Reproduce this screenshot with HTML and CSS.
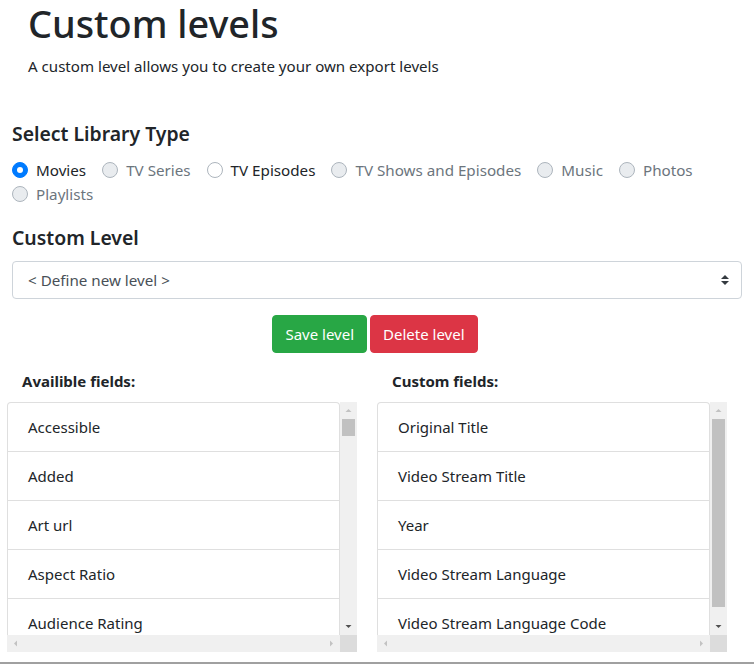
FILE: index.html
```html
<!DOCTYPE html>
<html lang="en">
<head>
<meta charset="utf-8">
<title>Custom levels</title>
<link rel="stylesheet" href="styles.css">
</head>
<body>
<div class="page">
  <header class="intro">
    <h1 class="title">Custom levels</h1>
    <p class="lead">A custom level allows you to create your own export levels</p>
  </header>

  <h5 class="section">Select Library Type</h5>
  <div class="radios">
    <label class="radio"><span class="dot checked"></span><span class="rlabel">Movies</span></label>
    <label class="radio disabled"><span class="dot"></span><span class="rlabel">TV Series</span></label>
    <label class="radio"><span class="dot"></span><span class="rlabel">TV Episodes</span></label>
    <label class="radio disabled"><span class="dot"></span><span class="rlabel">TV Shows and Episodes</span></label>
    <label class="radio disabled"><span class="dot"></span><span class="rlabel">Music</span></label>
    <label class="radio disabled"><span class="dot"></span><span class="rlabel">Photos</span></label>
    <label class="radio disabled"><span class="dot"></span><span class="rlabel">Playlists</span></label>
  </div>

  <h5 class="section section-2">Custom Level</h5>
  <div class="select">
    <span class="select-text">&lt; Define new level &gt;</span>
    <svg class="select-arrow" width="8" height="10" viewBox="0 0 4 5"><path fill="#343a40" d="M2 0L0 2h4zm0 5L0 3h4z"/></svg>
  </div>

  <div class="buttons">
    <button class="btn btn-save">Save level</button>
    <button class="btn btn-delete">Delete level</button>
  </div>

  <div class="columns">
    <div class="col">
      <div class="col-label">Availible fields:</div>
      <div class="scrollbox">
        <div class="viewport">
          <ul class="list">
            <li>Accessible</li>
            <li>Added</li>
            <li>Art url</li>
            <li>Aspect Ratio</li>
            <li>Audience Rating</li>
          </ul>
        </div>
        <div class="vbar">
          <svg class="arrow" width="17" height="17" viewBox="0 0 17 17"><path fill="#c2c2c2" d="M5.5 10h6L8.5 7z"/></svg>
          <div class="thumb thumb-small"></div>
          <div class="track-fill"></div>
          <svg class="arrow" width="17" height="17" viewBox="0 0 17 17"><path fill="#505050" d="M5.5 7h6L8.5 10z"/></svg>
        </div>
        <div class="hbar">
          <svg class="arrow" width="17" height="17" viewBox="0 0 17 17"><path fill="#c2c2c2" d="M10 5.5v6L7 8.5z"/></svg>
          <svg class="arrow" width="17" height="17" viewBox="0 0 17 17"><path fill="#c2c2c2" d="M7 5.5v6L10 8.5z"/></svg>
        </div>
        <div class="corner"></div>
      </div>
    </div>
    <div class="col">
      <div class="col-label">Custom fields:</div>
      <div class="scrollbox">
        <div class="viewport">
          <ul class="list">
            <li>Original Title</li>
            <li>Video Stream Title</li>
            <li>Year</li>
            <li>Video Stream Language</li>
            <li>Video Stream Language Code</li>
          </ul>
        </div>
        <div class="vbar">
          <svg class="arrow" width="17" height="17" viewBox="0 0 17 17"><path fill="#c2c2c2" d="M5.5 10h6L8.5 7z"/></svg>
          <div class="thumb thumb-large"></div>
          <div class="track-fill"></div>
          <svg class="arrow" width="17" height="17" viewBox="0 0 17 17"><path fill="#505050" d="M5.5 7h6L8.5 10z"/></svg>
        </div>
        <div class="hbar">
          <svg class="arrow" width="17" height="17" viewBox="0 0 17 17"><path fill="#c2c2c2" d="M10 5.5v6L7 8.5z"/></svg>
          <svg class="arrow" width="17" height="17" viewBox="0 0 17 17"><path fill="#c2c2c2" d="M7 5.5v6L10 8.5z"/></svg>
        </div>
        <div class="corner"></div>
      </div>
    </div>
  </div>
  <div class="bottom-rule"></div>
</div>
</body>
</html>
```

FILE: styles.css
```css
* { box-sizing: border-box; }

html, body {
  margin: 0;
  padding: 0;
  background: #fff;
}

body {
  font-family: "Noto Sans", "Open Sans", sans-serif;
  font-size: 15px;
  line-height: 24px;
  color: #212529;
  overflow: hidden;
}

.page {
  width: 754px;
  height: 664px;
  padding: 0 12px 0 12px;
}

.intro {
  padding-left: 16px;
}

.title {
  margin: 0;
  font-size: 37.8px;
  font-weight: 500;
  line-height: 48px;
  letter-spacing: 0;
}

.lead {
  margin: 6px 0 0 0;
  font-size: 15.1px;
  line-height: 24px;
}

.section {
  margin: 44px 0 0 0;
  font-size: 19.4px;
  font-weight: 600;
  line-height: 24px;
}

.section-2 {
  margin-top: 20px;
}

.radios {
  display: flex;
  flex-wrap: wrap;
  margin-top: 12px;
  width: 730px;
}

.radio {
  display: flex;
  align-items: center;
  margin-right: 16px;
  height: 24px;
  font-size: 15.2px;
}

.dot {
  width: 16px;
  height: 16px;
  border-radius: 50%;
  border: 1px solid #adb5bd;
  background: #fff;
  margin-right: 8px;
  display: flex;
  align-items: center;
  justify-content: center;
}

.radio.disabled .dot {
  background: #e9ecef;
}

.radio.disabled .rlabel {
  color: #6c757d;
}

.dot.checked {
  background: #007bff;
  border-color: #007bff;
}

.dot.checked::after {
  content: "";
  width: 6px;
  height: 6px;
  border-radius: 50%;
  background: #fff;
}

.select {
  margin-top: 11px;
  height: 38px;
  width: 730px;
  border: 1px solid #ced4da;
  border-radius: 4px;
  display: flex;
  align-items: center;
  justify-content: space-between;
  padding: 0 12px 0 15px;
  color: #495057;
  font-size: 15.2px;
}

.select-arrow {
  display: block;
}

.buttons {
  display: flex;
  justify-content: center;
  gap: 3px;
  margin-top: 16px;
  padding-right: 4px;
}

.btn {
  font-family: inherit;
  font-size: 15px;
  line-height: 24px;
  padding: 6px 12px;
  height: 38px;
  border-radius: 4px;
  border: 1px solid transparent;
  color: #fff;
}

.btn-save {
  background: #28a745;
  border-color: #28a745;
}

.btn-delete {
  background: #dc3545;
  border-color: #dc3545;
}

.columns {
  display: flex;
  gap: 20px;
  margin-top: 16px;
  margin-left: -5px;
}

.col {
  width: 350px;
}

.col-label {
  font-size: 15px;
  font-weight: 700;
  line-height: 24px;
  padding-left: 15px;
  height: 24px;
}

.scrollbox {
  margin-top: 9px;
  display: grid;
  grid-template-columns: 333px 17px;
  grid-template-rows: 233px 17px;
}

.viewport {
  overflow: hidden;
}

.list {
  list-style: none;
  margin: 0;
  padding: 0;
}

.list li {
  height: 49px;
  padding: 12px 20px;
  border: 1px solid #dfdfdf;
  border-bottom: none;
  font-size: 15px;
  line-height: 24px;
  white-space: nowrap;
}

.list li:first-child {
  border-radius: 4px 4px 0 0;
}

.vbar {
  background: #f0f0f0;
  display: flex;
  flex-direction: column;
}

.arrow {
  display: block;
  flex: none;
}

.thumb {
  flex: none;
  margin: 0 2px;
  background: #c1c1c1;
}

.thumb-small {
  height: 17px;
}

.thumb-large {
  height: 188px;
}

.track-fill {
  flex: 1;
}

.hbar {
  background: #f0f0f0;
  display: flex;
  justify-content: space-between;
}

.corner {
  background: #dcdcdc;
}

.bottom-rule {
  margin: 10px -12px 0 -12px;
  height: 2px;
  background: #a0a0a0;
}
```
